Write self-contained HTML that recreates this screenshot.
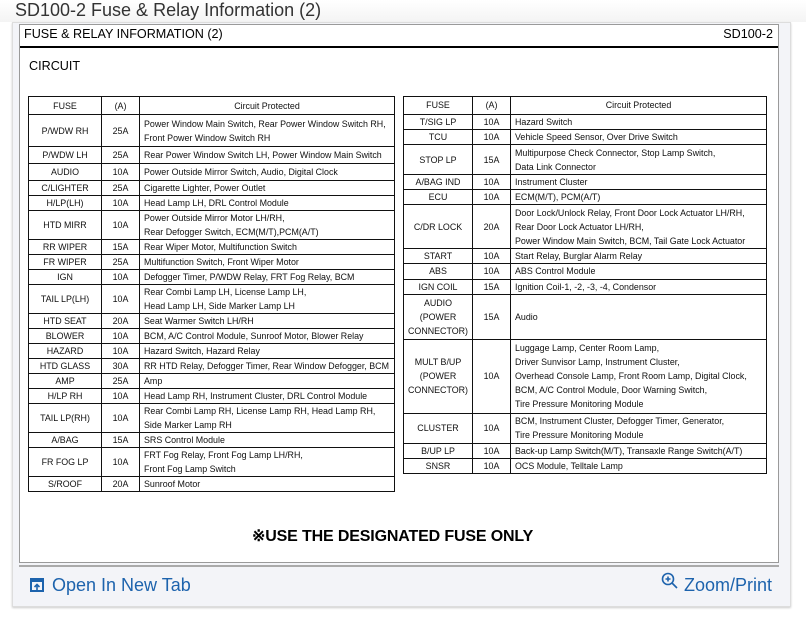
<!DOCTYPE html>
<html><head><meta charset="utf-8"><style>
*{margin:0;padding:0;box-sizing:border-box}
body{width:806px;height:628px;background:#fff;position:relative;font-family:"Liberation Sans",sans-serif;overflow:hidden}
.title{position:absolute;left:15px;top:0px;font-size:18px;color:#333;white-space:nowrap}
.topbar{position:absolute;left:0;top:0;width:806px;height:22px;background:linear-gradient(#fff,#f4f4f4)}
.card{position:absolute;left:12px;top:22px;width:779px;height:585px;background:#f3f4f8;border:1px solid #ddd;box-shadow:0 1px 2px #ccc}
.frame{position:absolute;left:19px;top:24px;width:760px;height:539px;background:#fff;border:1px solid #9a9a9a}
.sep{position:absolute;left:19px;top:565px;width:760px;height:2px;background:#aaa}
.h1{position:absolute;left:4px;top:2px;font-size:12.6px;color:#000}
.h2{position:absolute;right:5px;top:2px;font-size:12.6px;color:#000}
.hl{position:absolute;left:0;top:21px;width:758px;height:2px;background:#000}
.circ{position:absolute;left:9px;top:34px;font-size:12.6px}
table{position:absolute;border-collapse:collapse;font-size:8.9px;color:#111;white-space:nowrap}
td{border:1px solid #111;line-height:14px;padding:0 4px;vertical-align:middle}
#r td{line-height:14.1px}
td.c{text-align:center;padding:0}
.note{position:absolute;left:252px;top:528px;font-size:16px;font-weight:bold;letter-spacing:-0.15px;line-height:18px}
.link{position:absolute;top:575px;font-size:18px;color:#1d63ad;font-family:"Liberation Sans Narrow","Liberation Sans",sans-serif;font-stretch:condensed}
</style></head><body>
<div class="topbar"></div>
<div class="title">SD100-2 Fuse &amp; Relay Information (2)</div>
<div class="card"></div>
<div class="frame">
<div class="h1">FUSE &amp; RELAY INFORMATION (2)</div>
<div class="h2">SD100-2</div>
<div class="hl"></div>
<div class="circ">CIRCUIT</div>
</div>
<table style="left:28px;top:96px;width:367px;border:1.5px solid #111">
<colgroup><col style="width:73px"><col style="width:38px"><col></colgroup>
<tr style="height:18px"><td class="c">FUSE</td><td class="c">(A)</td><td class="c">Circuit Protected</td></tr>
<tr style="height:32px"><td class="c">P/WDW RH</td><td class="c">25A</td><td>Power Window Main Switch, Rear Power Window Switch RH,<br>Front Power Window Switch RH</td></tr>
<tr style="height:17px"><td class="c">P/WDW LH</td><td class="c">25A</td><td>Rear Power Window Switch LH, Power Window Main Switch</td></tr>
<tr style="height:17px"><td class="c">AUDIO</td><td class="c">10A</td><td>Power Outside Mirror Switch, Audio, Digital Clock</td></tr>
<tr><td class="c">C/LIGHTER</td><td class="c">25A</td><td>Cigarette Lighter, Power Outlet</td></tr>
<tr><td class="c">H/LP(LH)</td><td class="c">10A</td><td>Head Lamp LH, DRL Control Module</td></tr>
<tr><td class="c">HTD MIRR</td><td class="c">10A</td><td>Power Outside Mirror Motor LH/RH,<br>Rear Defogger Switch, ECM(M/T),PCM(A/T)</td></tr>
<tr><td class="c">RR WIPER</td><td class="c">15A</td><td>Rear Wiper Motor, Multifunction Switch</td></tr>
<tr><td class="c">FR WIPER</td><td class="c">25A</td><td>Multifunction Switch, Front Wiper Motor</td></tr>
<tr><td class="c">IGN</td><td class="c">10A</td><td>Defogger Timer, P/WDW Relay, FRT Fog Relay, BCM</td></tr>
<tr><td class="c">TAIL LP(LH)</td><td class="c">10A</td><td>Rear Combi Lamp LH, License Lamp LH,<br>Head Lamp LH, Side Marker Lamp LH</td></tr>
<tr><td class="c">HTD SEAT</td><td class="c">20A</td><td>Seat Warmer Switch LH/RH</td></tr>
<tr><td class="c">BLOWER</td><td class="c">10A</td><td>BCM, A/C Control Module, Sunroof Motor, Blower Relay</td></tr>
<tr><td class="c">HAZARD</td><td class="c">10A</td><td>Hazard Switch, Hazard Relay</td></tr>
<tr><td class="c">HTD GLASS</td><td class="c">30A</td><td>RR HTD Relay, Defogger Timer, Rear Window Defogger, BCM</td></tr>
<tr><td class="c">AMP</td><td class="c">25A</td><td>Amp</td></tr>
<tr><td class="c">H/LP RH</td><td class="c">10A</td><td>Head Lamp RH, Instrument Cluster, DRL Control Module</td></tr>
<tr><td class="c">TAIL LP(RH)</td><td class="c">10A</td><td>Rear Combi Lamp RH, License Lamp RH, Head Lamp RH,<br>Side Marker Lamp RH</td></tr>
<tr><td class="c">A/BAG</td><td class="c">15A</td><td>SRS Control Module</td></tr>
<tr><td class="c">FR FOG LP</td><td class="c">10A</td><td>FRT Fog Relay, Front Fog Lamp LH/RH,<br>Front Fog Lamp Switch</td></tr>
<tr><td class="c">S/ROOF</td><td class="c">20A</td><td>Sunroof Motor</td></tr>
</table>
<table id="r" style="left:403px;top:96px;width:364px;border:1.5px solid #111">
<colgroup><col style="width:69px"><col style="width:38px"><col></colgroup>
<tr style="height:18px"><td class="c">FUSE</td><td class="c">(A)</td><td class="c">Circuit Protected</td></tr>
<tr><td class="c">T/SIG LP</td><td class="c">10A</td><td>Hazard Switch</td></tr>
<tr><td class="c">TCU</td><td class="c">10A</td><td>Vehicle Speed Sensor, Over Drive Switch</td></tr>
<tr style="height:30px"><td class="c">STOP LP</td><td class="c">15A</td><td>Multipurpose Check Connector, Stop Lamp Switch,<br>Data Link Connector</td></tr>
<tr><td class="c">A/BAG IND</td><td class="c">10A</td><td>Instrument Cluster</td></tr>
<tr><td class="c">ECU</td><td class="c">10A</td><td>ECM(M/T), PCM(A/T)</td></tr>
<tr style="height:44px"><td class="c">C/DR LOCK</td><td class="c">20A</td><td>Door Lock/Unlock Relay, Front Door Lock Actuator LH/RH,<br>Rear Door Lock Actuator LH/RH,<br>Power Window Main Switch, BCM, Tail Gate Lock Actuator</td></tr>
<tr><td class="c">START</td><td class="c">10A</td><td>Start Relay, Burglar Alarm Relay</td></tr>
<tr><td class="c">ABS</td><td class="c">10A</td><td>ABS Control Module</td></tr>
<tr><td class="c">IGN COIL</td><td class="c">15A</td><td>Ignition Coil-1, -2, -3, -4, Condensor</td></tr>
<tr style="height:45px"><td class="c">AUDIO<br>(POWER<br>CONNECTOR)</td><td class="c">15A</td><td>Audio</td></tr>
<tr style="height:74px"><td class="c">MULT B/UP<br>(POWER<br>CONNECTOR)</td><td class="c">10A</td><td>Luggage Lamp, Center Room Lamp,<br>Driver Sunvisor Lamp, Instrument Cluster,<br>Overhead Console Lamp, Front Room Lamp, Digital Clock,<br>BCM, A/C Control Module, Door Warning Switch,<br>Tire Pressure Monitoring Module</td></tr>
<tr style="height:30px"><td class="c">CLUSTER</td><td class="c">10A</td><td>BCM, Instrument Cluster, Defogger Timer, Generator,<br>Tire Pressure Monitoring Module</td></tr>
<tr><td class="c">B/UP LP</td><td class="c">10A</td><td>Back-up Lamp Switch(M/T), Transaxle Range Switch(A/T)</td></tr>
<tr><td class="c">SNSR</td><td class="c">10A</td><td>OCS Module, Telltale Lamp</td></tr>
</table>
<div class="note">※USE THE DESIGNATED FUSE ONLY</div>
<div class="sep"></div>
<svg style="position:absolute;left:30px;top:578px" width="14" height="14" viewBox="0 0 14 14"><rect x="1" y="1" width="12" height="12" fill="none" stroke="#1d63ad" stroke-width="2"/><rect x="1" y="1" width="12" height="3" fill="#1d63ad"/><path d="M7 12V7M4.5 9L7 6.5 9.5 9" fill="none" stroke="#1d63ad" stroke-width="1.6"/></svg>
<div class="link" style="left:52px">Open In New Tab</div>
<svg style="position:absolute;left:661px;top:572px" width="18" height="18" viewBox="0 0 18 18"><circle cx="7" cy="7" r="5.5" fill="none" stroke="#1d63ad" stroke-width="1.6"/><path d="M11 11l5 5M7 4.5v5M4.5 7h5" stroke="#1d63ad" stroke-width="1.6"/></svg>
<div class="link" style="left:684px">Zoom/Print</div>
</body></html>
